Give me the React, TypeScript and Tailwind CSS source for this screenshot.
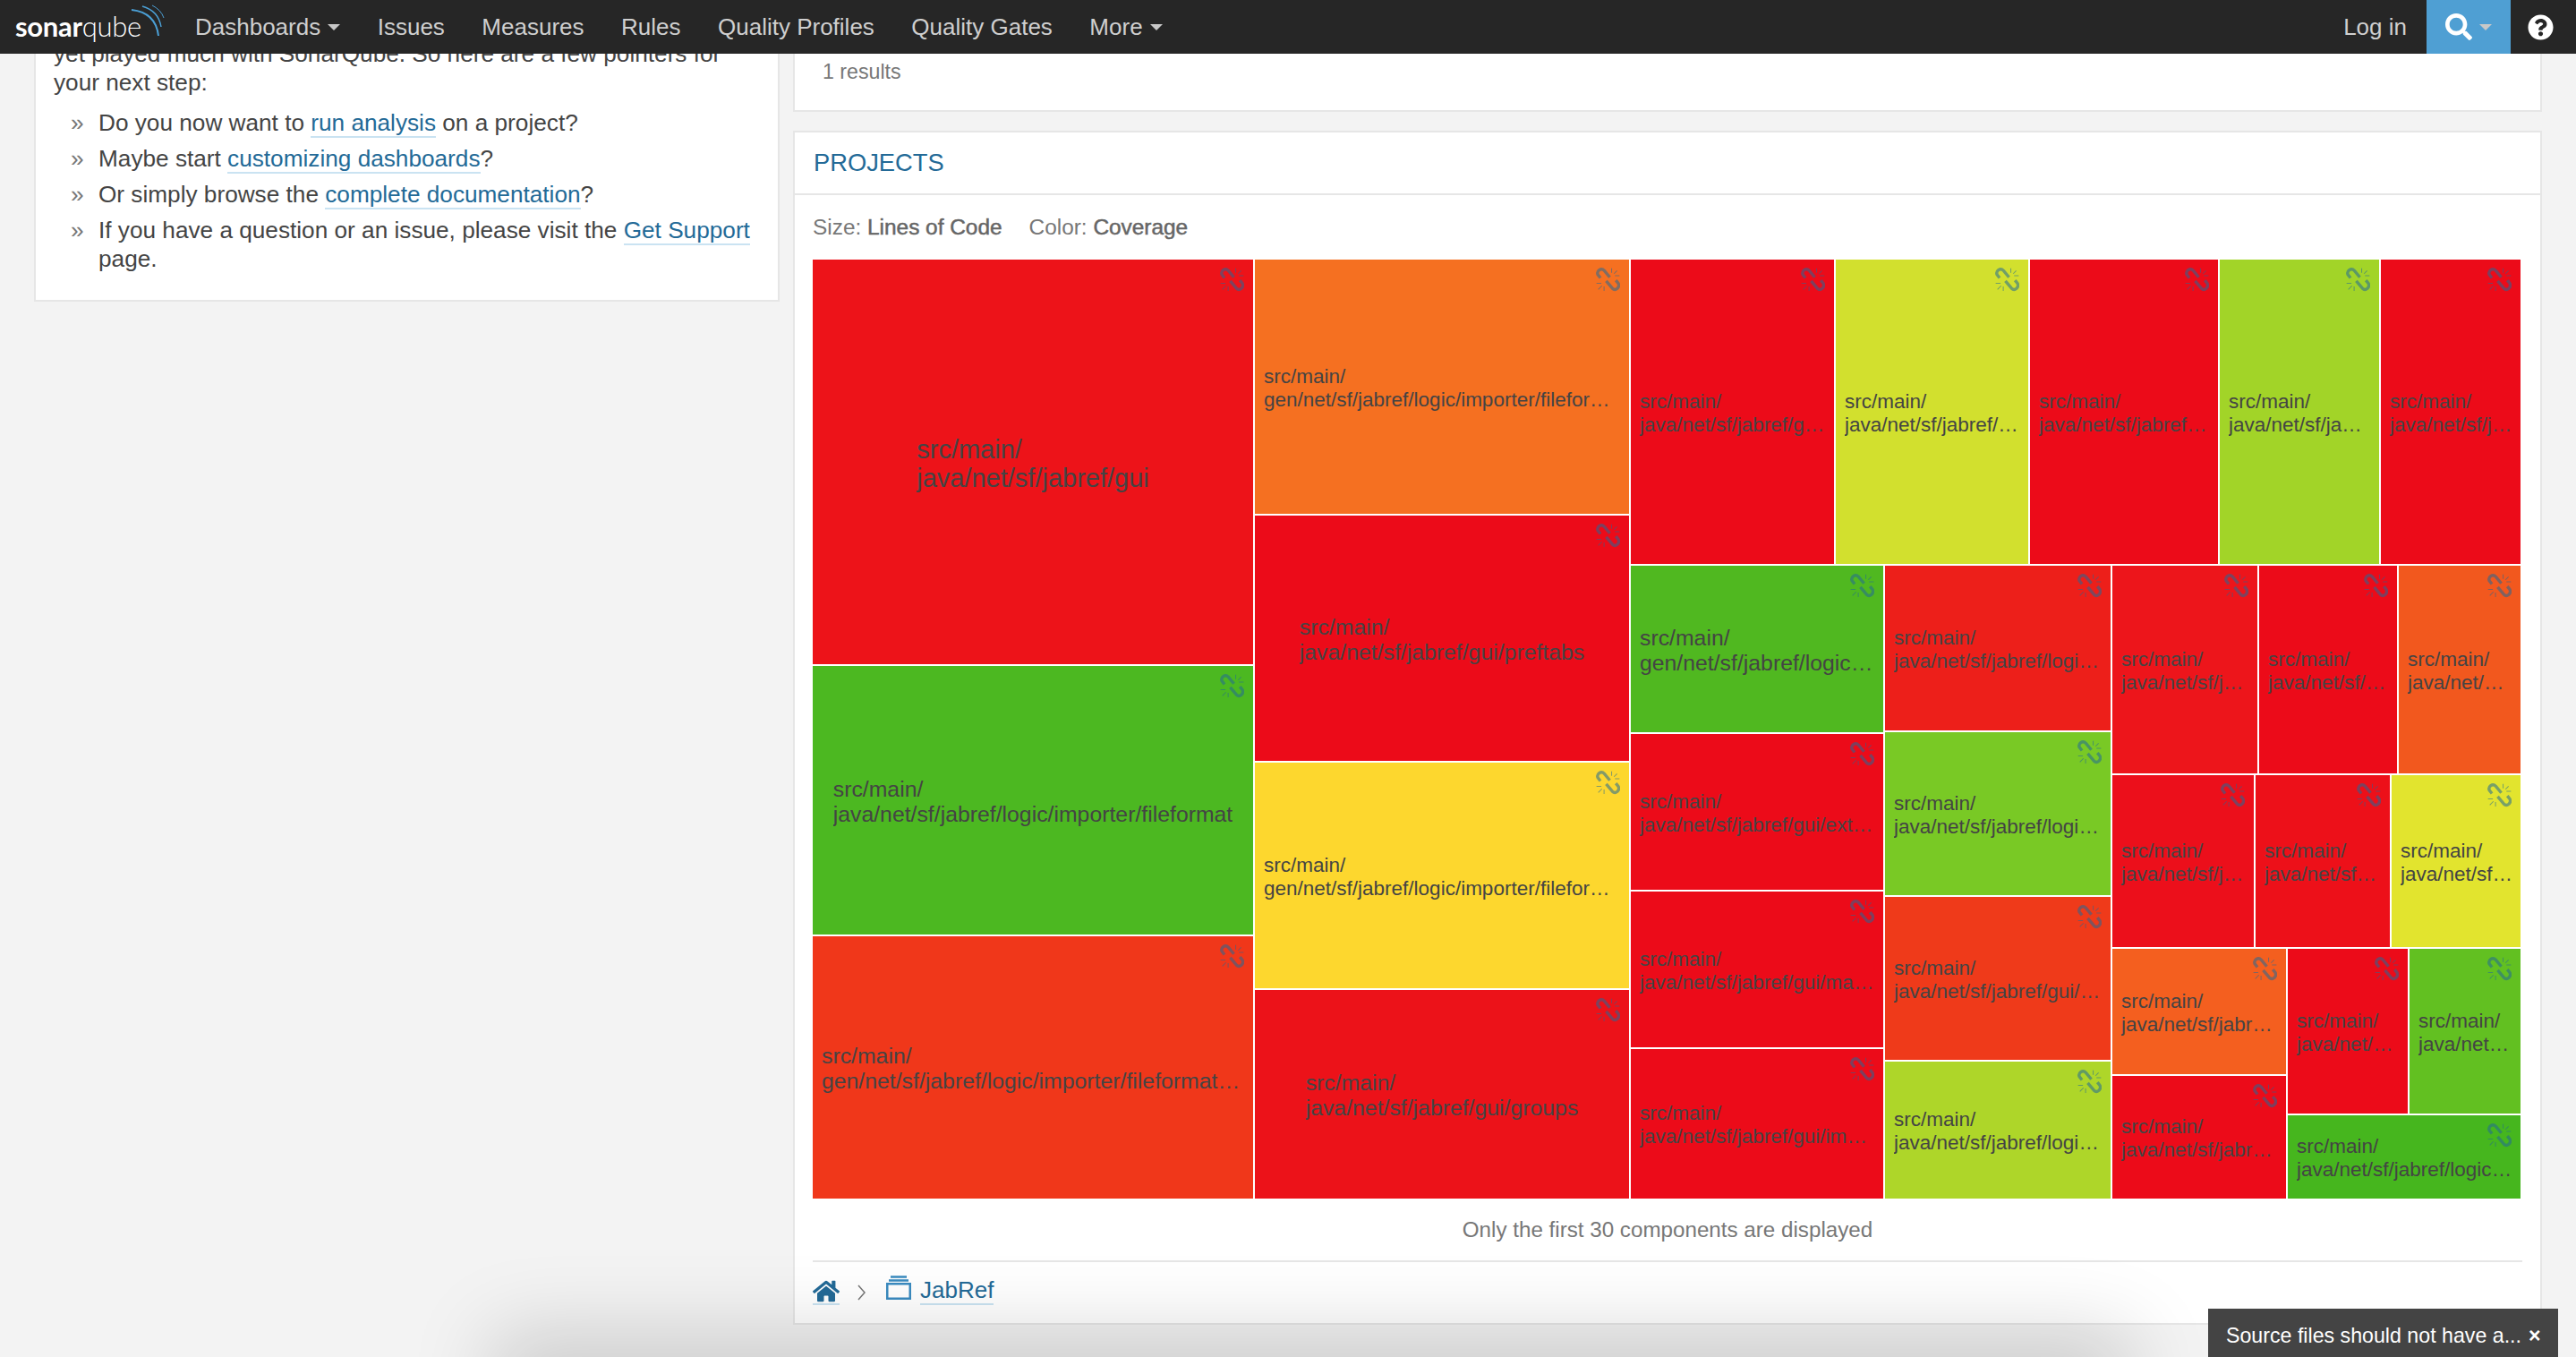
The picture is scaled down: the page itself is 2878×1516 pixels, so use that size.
import { FaHome, FaQuestionCircle, FaSearch } from "react-icons/fa";

type Cell = {
  x1: number;
  y1: number;
  x2: number;
  y2: number;
  color: string;
  path: string;
  text: string;
  tight?: boolean;
};

const MAP_X = 908;
const MAP_Y = 290;
const SMALL = "text-[22.5px] leading-[26px]";
const MID = "text-[24.8px] leading-[28px]";
const BIG = "text-[29px] leading-[32px]";

const cells: Cell[] = [
  { x1: 908, y1: 290, x2: 1400, y2: 742, color: "#ed1319", path: "java/net/sf/jabref/gui", text: BIG },
  { x1: 908, y1: 744, x2: 1400, y2: 1044, color: "#4cb821", path: "java/net/sf/jabref/logic/importer/fileformat", text: MID },
  { x1: 908, y1: 1046, x2: 1400, y2: 1339, color: "#f0371a", path: "gen/net/sf/jabref/logic/importer/fileformat/bibtexml", text: MID },
  { x1: 1402, y1: 290, x2: 1820, y2: 574, color: "#f57021", path: "gen/net/sf/jabref/logic/importer/fileformat/medline", text: SMALL },
  { x1: 1402, y1: 576, x2: 1820, y2: 850, color: "#ec0b19", path: "java/net/sf/jabref/gui/preftabs", text: MID },
  { x1: 1402, y1: 852, x2: 1820, y2: 1104, color: "#fdd72e", path: "gen/net/sf/jabref/logic/importer/fileformat/endnote", text: SMALL },
  { x1: 1402, y1: 1106, x2: 1820, y2: 1339, color: "#ec1219", path: "java/net/sf/jabref/gui/groups", text: MID },
  { x1: 1822, y1: 290, x2: 2049, y2: 630, color: "#ec0b19", path: "java/net/sf/jabref/gui/worker", text: SMALL },
  { x1: 2051, y1: 290, x2: 2266, y2: 630, color: "#d2e02e", path: "java/net/sf/jabref/logic/util", text: SMALL },
  { x1: 2268, y1: 290, x2: 2478, y2: 630, color: "#ec0b19", path: "java/net/sf/jabref/logic/util", text: SMALL, tight: true },
  { x1: 2480, y1: 290, x2: 2658, y2: 630, color: "#a2d428", path: "java/net/sf/jabref/logic", text: SMALL },
  { x1: 2660, y1: 290, x2: 2816, y2: 630, color: "#ec0b19", path: "java/net/sf/jabref/gui", text: SMALL, tight: true },
  { x1: 1822, y1: 632, x2: 2104, y2: 818, color: "#50b820", path: "gen/net/sf/jabref/logic/parser/grammar", text: MID, tight: true },
  { x1: 1822, y1: 820, x2: 2104, y2: 994, color: "#ec0b19", path: "java/net/sf/jabref/gui/externalfiles", text: SMALL },
  { x1: 1822, y1: 996, x2: 2104, y2: 1170, color: "#ec0b19", path: "java/net/sf/jabref/gui/maintable", text: SMALL },
  { x1: 1822, y1: 1172, x2: 2104, y2: 1339, color: "#ec0b19", path: "java/net/sf/jabref/gui/importer", text: SMALL },
  { x1: 2106, y1: 632, x2: 2358, y2: 816, color: "#ed1f1a", path: "java/net/sf/jabref/logic/importer", text: SMALL },
  { x1: 2106, y1: 818, x2: 2358, y2: 1000, color: "#79c925", path: "java/net/sf/jabref/logic/layout", text: SMALL },
  { x1: 2106, y1: 1002, x2: 2358, y2: 1184, color: "#ef3a1a", path: "java/net/sf/jabref/gui/entryeditor", text: SMALL },
  { x1: 2106, y1: 1186, x2: 2358, y2: 1339, color: "#aed629", path: "java/net/sf/jabref/logic/bibtex", text: SMALL },
  { x1: 2360, y1: 632, x2: 2522, y2: 864, color: "#ed151b", path: "java/net/sf/jabref/gui", text: SMALL },
  { x1: 2524, y1: 632, x2: 2678, y2: 864, color: "#ec0b19", path: "java/net/sf/jabref", text: SMALL },
  { x1: 2680, y1: 632, x2: 2816, y2: 864, color: "#f2581e", path: "java/net/sf/jabref", text: SMALL },
  { x1: 2360, y1: 866, x2: 2518, y2: 1058, color: "#ec0f1b", path: "java/net/sf/jabref/gui", text: SMALL },
  { x1: 2520, y1: 866, x2: 2670, y2: 1058, color: "#ed1019", path: "java/net/sf/jabref", text: SMALL },
  { x1: 2672, y1: 866, x2: 2816, y2: 1058, color: "#e2e42e", path: "java/net/sf/jabref", text: SMALL, tight: true },
  { x1: 2360, y1: 1060, x2: 2554, y2: 1200, color: "#f45f1f", path: "java/net/sf/jabref/logic", text: SMALL },
  { x1: 2360, y1: 1202, x2: 2554, y2: 1339, color: "#ec0b19", path: "java/net/sf/jabref/logic", text: SMALL },
  { x1: 2556, y1: 1060, x2: 2690, y2: 1244, color: "#ec0b19", path: "java/net/sf/jabref", text: SMALL },
  { x1: 2692, y1: 1060, x2: 2816, y2: 1244, color: "#62c021", path: "java/net/sf/jabref", text: SMALL },
  { x1: 2556, y1: 1246, x2: 2816, y2: 1339, color: "#46b61e", path: "java/net/sf/jabref/logic/importer/fileformat", text: SMALL, tight: true },
];

function Caret() {
  return <span className="ml-[8px] inline-block h-0 w-0 border-x-[7px] border-t-[7px] border-x-transparent border-t-[#c8c8c8]" />;
}

function BrokenLink() {
  return (
    <svg viewBox="0 0 80 80" className="absolute right-[10px] top-[9px] h-[27px] w-[27px] text-[#236a97] opacity-55" fill="none" stroke="currentColor">
      <path d="M15 34 L7 24 Q2 15 11 8 Q20 2 28 10 L46 32" strokeWidth="10" />
      <path d="M34 44 L54 68 Q62 76 71 69 Q79 61 74 52 L66 42" strokeWidth="10" />
      <path d="M52 2 V17 M70 10 L60 20 M78 27 H63 M2 52 H18 M8 72 L20 60 M27 62 V77" strokeWidth="3" />
    </svg>
  );
}

function Logo() {
  return (
    <div className="relative flex h-[60px] w-[218px] items-baseline pl-[17px] pt-[10px] text-[31px] leading-[38px] text-white [font-family:Lato,sans-serif]">
      <span className="font-bold tracking-[-0.3px]">sonar</span>
      <span className="font-light tracking-[-0.3px]">qube</span>
      <svg viewBox="0 0 200 62" className="absolute left-0 top-0 h-[62px] w-[200px]" fill="none" stroke="#4b9fd5">
        <path d="M147 11 Q174 14 177 40" strokeWidth="2" />
        <path d="M159 7 Q177 12 180 30" strokeWidth="1.5" />
        <path d="M170 6 Q180 11 183 20" strokeWidth="1" />
      </svg>
    </div>
  );
}

function TextLink({ children }: { children: string }) {
  return <a className="border-b-2 border-[#cae3f2] text-[#236a97]">{children}</a>;
}

function Bullet({ children }: { children: React.ReactNode }) {
  return (
    <li className="flex">
      <span className="w-[31px] shrink-0 text-[#777]">»</span>
      <div>{children}</div>
    </li>
  );
}

export default function App() {
  const nav = ["Issues", "Measures", "Rules", "Quality Profiles", "Quality Gates"];

  return (
    <div className="relative h-[1516px] overflow-hidden bg-[#f3f3f3] text-[26.2px] leading-[32px] text-[#444] [font-family:'Liberation_Sans',Arial,sans-serif]">
      <header className="absolute inset-x-0 top-0 z-20 flex h-[60px] items-center bg-[#262626] text-[26px] text-[#cfcfcf]">
        <Logo />
        <div className="flex items-center gap-[41.5px]">
          <span className="flex items-center">
            Dashboards
            <Caret />
          </span>
          {nav.map((item) => (
            <span key={item}>{item}</span>
          ))}
          <span className="flex items-center">
            More
            <Caret />
          </span>
        </div>
        <div className="ml-auto flex h-full items-center">
          <span>Log in</span>
          <div className="ml-[22px] flex h-full w-[94px] items-center justify-center bg-[#4f9fd3]">
            <FaSearch className="h-[30px] w-[30px] text-white" />
            <Caret />
          </div>
          <div className="flex w-[73px] justify-center pr-[6px]">
            <FaQuestionCircle className="h-[29px] w-[29px] text-white" />
          </div>
        </div>
      </header>

      <main className="flex items-start pl-[38px]">
        <section className="w-[833px] border-x-2 border-b-2 border-[#e6e6e6] bg-white px-[20px] pb-[30px] pt-[44px]">
          <p>yet played much with SonarQube. So here are a few pointers for your next step:</p>
          <ul className="mt-[13px] flex flex-col gap-[8px] pl-[19px]">
            <Bullet>
              Do you now want to <TextLink>run analysis</TextLink> on a project?
            </Bullet>
            <Bullet>
              Maybe start <TextLink>customizing dashboards</TextLink>?
            </Bullet>
            <Bullet>
              Or simply browse the <TextLink>complete documentation</TextLink>?
            </Bullet>
            <Bullet>
              If you have a question or an issue, please visit the <TextLink>Get Support</TextLink> page.
            </Bullet>
          </ul>
        </section>

        <div className="ml-[15px] w-[1954px]">
          <section className="h-[125px] border-x-2 border-b-2 border-[#e6e6e6] bg-white pl-[31px] pt-[64px] text-[23.2px] text-[#777]">
            1 results
          </section>

          <section className="mt-[21px] h-[1334px] border-2 border-[#e6e6e6] bg-white">
            <h2 className="flex h-[70px] items-center border-b-2 border-[#e6e6e6] pl-[21px] text-[27.3px] text-[#236a97]">PROJECTS</h2>
            <div className="flex h-[72px] items-center gap-[30px] pl-[20px] text-[24.4px] text-[#777]">
              <span>
                Size: <span className="text-[#666] [-webkit-text-stroke:0.5px_#666]">Lines of Code</span>
              </span>
              <span>
                Color: <span className="text-[#666] [-webkit-text-stroke:0.5px_#666]">Coverage</span>
              </span>
            </div>
            <div className="relative ml-[20px] h-[1049px] w-[1908px]">
              {cells.map((cell) => (
                <div
                  key={`${cell.x1}-${cell.y1}`}
                  className={`absolute flex items-center justify-center pl-[10px] pt-[3px] text-[#444] ${cell.tight ? "pr-[7px]" : "pr-[10px]"} ${cell.text}`}
                  style={{
                    left: cell.x1 - MAP_X,
                    top: cell.y1 - MAP_Y,
                    width: cell.x2 - cell.x1,
                    height: cell.y2 - cell.y1,
                    backgroundColor: cell.color,
                  }}
                >
                  <BrokenLink />
                  <div className="min-w-0">
                    <div>src/main/</div>
                    <div className="truncate">{cell.path}</div>
                  </div>
                </div>
              ))}
            </div>
            <p className="flex h-[69px] items-center justify-center text-[24.2px] text-[#777]">Only the first 30 components are displayed</p>
            <div className="mx-[20px] flex h-[70px] items-start border-t-2 border-[#e6e6e6] pt-[18px]">
              <a className="flex h-[30px] items-center border-b-2 border-[#cae3f2] text-[#236a97]">
                <FaHome className="h-[29px] w-[30px]" />
              </a>
              <svg viewBox="0 0 10 18" className="ml-[20px] mt-[7px] h-[18px] w-[10px]" fill="none" stroke="#777" strokeWidth="1.5">
                <path d="M1 1 L8 9 L1 17" />
              </svg>
              <svg viewBox="0 0 28 27" className="ml-[22px] mt-[-3px] h-[27px] w-[28px]" fill="none" stroke="#3a8bc0" strokeWidth="2.5">
                <path d="M5 1.5 H23 M3 5.5 H25" />
                <rect x="1.25" y="9.25" width="25.5" height="16.5" />
              </svg>
              <a className="ml-[10px] h-[30px] border-b-2 border-[#cae3f2] text-[26px] leading-[26px] text-[#236a97]">JabRef</a>
            </div>
          </section>
        </div>
      </main>

      <div className="absolute left-[590px] top-[1530px] z-10 h-[20px] w-[1750px] shadow-[0_0_90px_40px_rgba(0,0,0,0.17)]" />

      <div className="absolute bottom-0 right-[20px] z-20 flex h-[54px] w-[391px] items-center gap-[8px] whitespace-nowrap bg-[#444] pl-[20px] pt-[5px] text-[23.2px] text-white">
        <span>Source files should not have a...</span>
        <span className="font-bold">×</span>
      </div>
    </div>
  );
}
